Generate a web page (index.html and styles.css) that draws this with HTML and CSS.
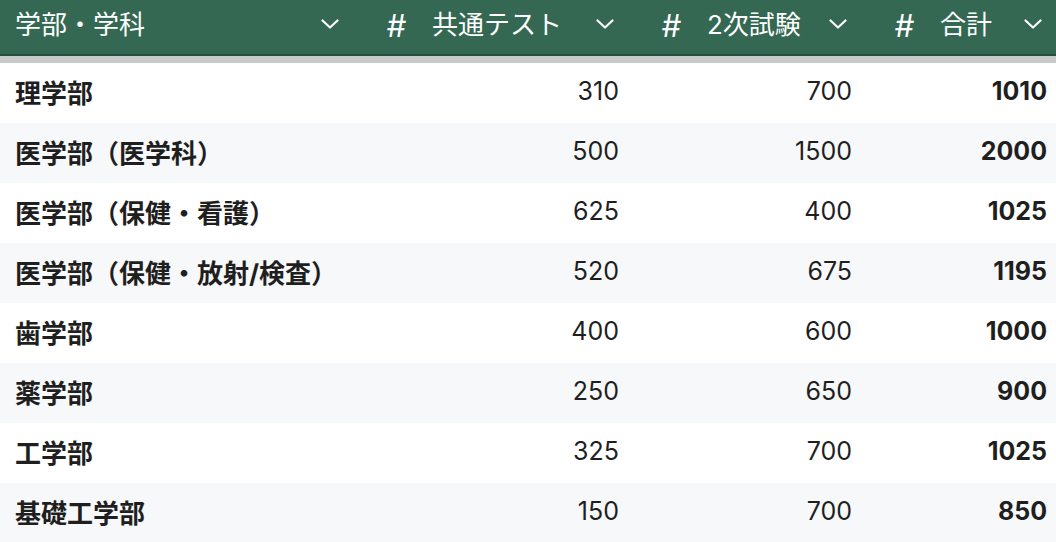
FILE: index.html
```html
<!DOCTYPE html>
<html lang="ja">
<head>
<meta charset="utf-8">
<link rel="stylesheet" href="styles.css">
</head>
<body>
<div class="table">
  <div class="head">
    <div class="hcell">
      <span class="title">学部・学科</span>
      <svg class="chev" viewBox="0 0 18 10"><path d="M1.5 1.5 L9 8.5 L16.5 1.5" /></svg>
    </div>
    <div class="hcell">
      <span class="hash">#</span><span class="title">共通テスト</span>
      <svg class="chev" viewBox="0 0 18 10"><path d="M1.5 1.5 L9 8.5 L16.5 1.5" /></svg>
    </div>
    <div class="hcell">
      <span class="hash">#</span><span class="title">2次試験</span>
      <svg class="chev" viewBox="0 0 18 10"><path d="M1.5 1.5 L9 8.5 L16.5 1.5" /></svg>
    </div>
    <div class="hcell">
      <span class="hash">#</span><span class="title">合計</span>
      <svg class="chev" viewBox="0 0 18 10"><path d="M1.5 1.5 L9 8.5 L16.5 1.5" /></svg>
    </div>
  </div>
  <div class="band"></div>
  <div class="rows">
    <div class="row"><div class="name">理学部</div><div class="num">310</div><div class="num">700</div><div class="num total">1010</div></div>
    <div class="row"><div class="name">医学部（医学科）</div><div class="num">500</div><div class="num">1500</div><div class="num total">2000</div></div>
    <div class="row"><div class="name">医学部（保健・看護）</div><div class="num">625</div><div class="num">400</div><div class="num total">1025</div></div>
    <div class="row"><div class="name">医学部（保健・放射/検査）</div><div class="num">520</div><div class="num">675</div><div class="num total">1195</div></div>
    <div class="row"><div class="name">歯学部</div><div class="num">400</div><div class="num">600</div><div class="num total">1000</div></div>
    <div class="row"><div class="name">薬学部</div><div class="num">250</div><div class="num">650</div><div class="num total">900</div></div>
    <div class="row"><div class="name">工学部</div><div class="num">325</div><div class="num">700</div><div class="num total">1025</div></div>
    <div class="row"><div class="name">基礎工学部</div><div class="num">150</div><div class="num">700</div><div class="num total">850</div></div>
  </div>
</div>
</body>
</html>
```
FILE: styles.css
```css
html, body {
  margin: 0;
  padding: 0;
  background: #ffffff;
  overflow: hidden;
}
body {
  width: 1056px;
  height: 542px;
  font-family: Inter, "Noto Sans CJK JP", sans-serif;
}
.table {
  width: 1073px;
}
.head,
.row {
  display: grid;
  grid-template-columns: 370px 275px 233px 195px;
}
.head {
  background: #346853;
  height: 54px;
  border-bottom: 2px solid #284e3f;
  color: #ffffff;
}
.hcell {
  display: flex;
  align-items: center;
  padding: 0 31px 9px 15px;
  font-size: 26px;
}
.hash {
  width: 22px;
  margin-right: 25px;
  margin-top: 5px;
  font-size: 31px;
  font-weight: 400;
  font-style: italic;
  line-height: 1;
  text-align: center;
}
.title {
  flex: 1;
  white-space: nowrap;
}
.chev {
  width: 18px;
  height: 10px;
  margin-top: 3px;
  fill: none;
  stroke: #ffffff;
  stroke-width: 2.2;
  stroke-linecap: round;
  stroke-linejoin: round;
}
.band {
  height: 7px;
  background: #c8cac9;
}
.row {
  height: 60px;
  box-sizing: border-box;
  padding-bottom: 4px;
  align-items: center;
  color: #1f1f1f;
  font-size: 25px;
}
.row:nth-child(even) {
  background: #f7f8f9;
}
.name {
  padding-left: 15px;
  font-size: 26px;
  font-weight: 700;
  white-space: nowrap;
}
.num {
  text-align: right;
  padding-right: 26px;
}
.total {
  font-weight: 700;
}
```
